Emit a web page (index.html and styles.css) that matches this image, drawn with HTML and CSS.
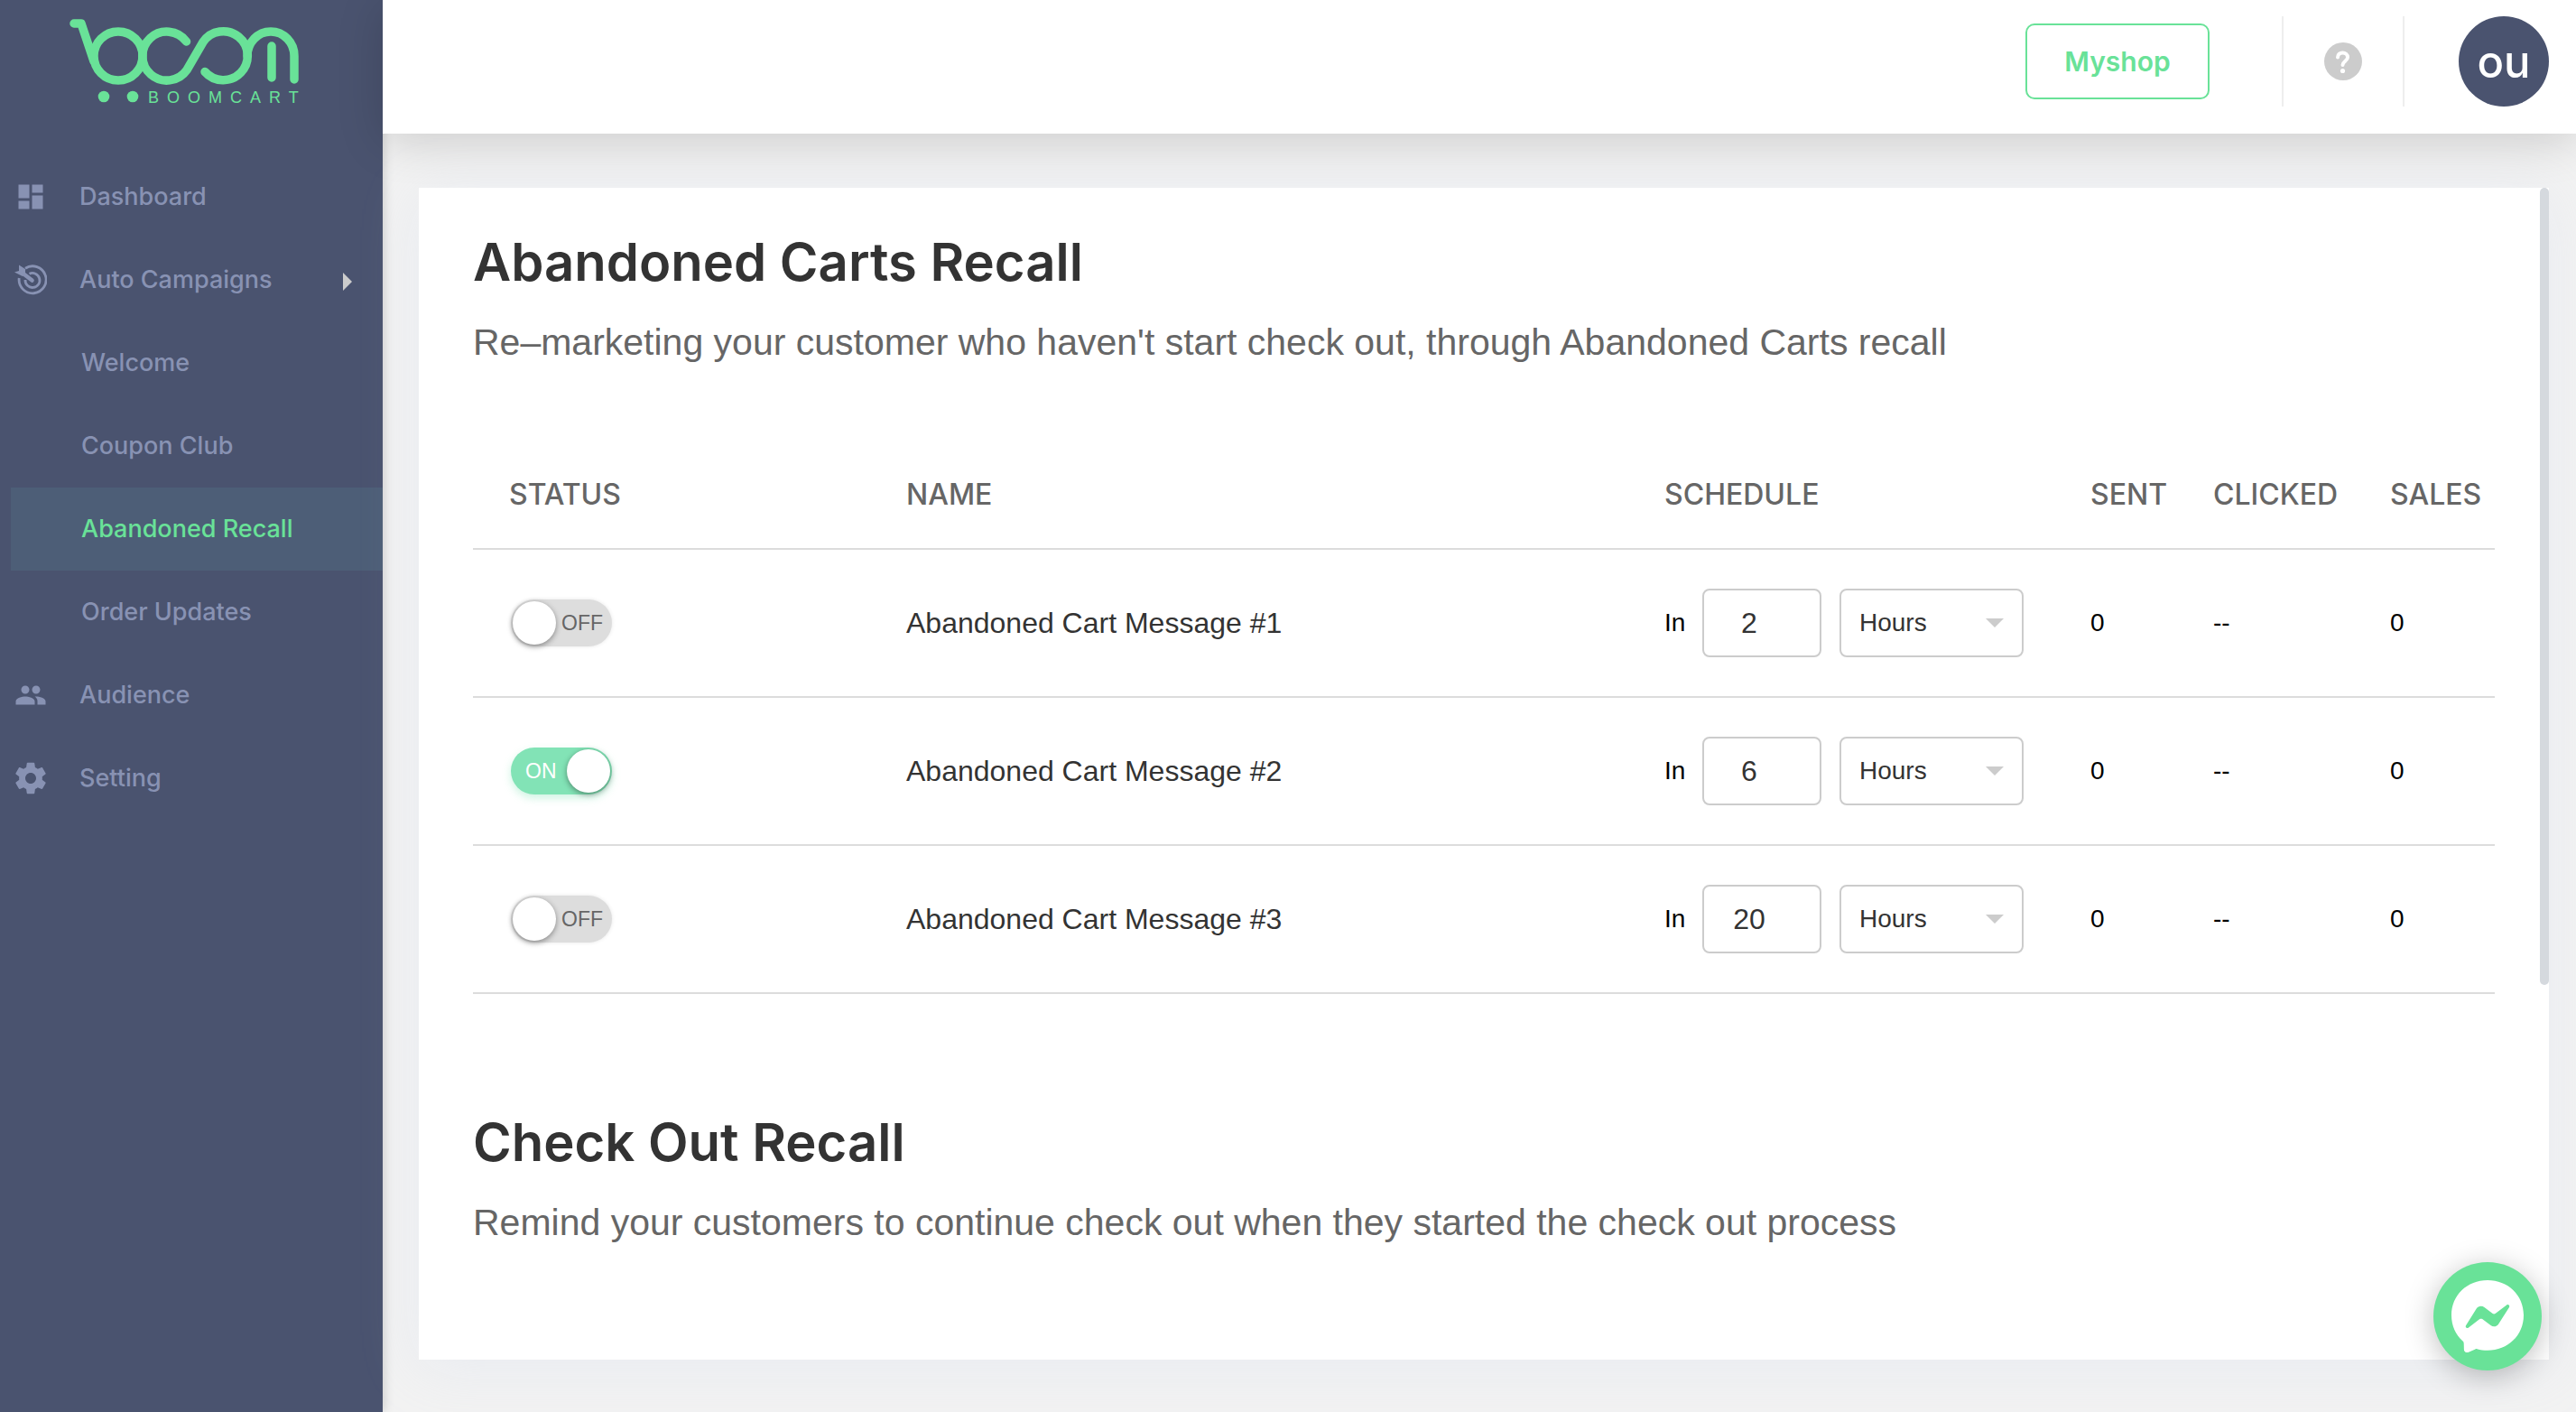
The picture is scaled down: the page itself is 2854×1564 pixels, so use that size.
FILE: index.html
```html
<!DOCTYPE html>
<html lang="en">
<head>
<meta charset="utf-8">
<meta name="viewport" content="width=device-width, initial-scale=1">
<title>Boomcart – Abandoned Recall</title>
<link rel="stylesheet" href="styles.css">
</head>
<body>
<div class="app">
  <aside class="sidebar">
    <a class="logo" href="#" aria-label="Boomcart">
      <svg class="logo-mark" viewBox="0 0 256 96" aria-hidden="true">
        <g fill="none" stroke="currentColor" stroke-width="9.5" stroke-linecap="round" stroke-linejoin="round">
          <path d="M6 6H14L28 48"/>
          <circle cx="55" cy="42" r="27"/>
          <path d="M130.500 26A27 27 0 1 0 131 57.500L149 26.500A27 27 0 1 1 151 59.500"/>
          <path d="M198 42A26 27 0 0 1 250 42V68M225 31V66"/>
        </g>
        <g fill="currentColor">
          <circle cx="39" cy="87" r="6.300"/>
          <circle cx="71" cy="87" r="6.300"/>
        </g>
      </svg>
      <span class="logo-name">BOOMCART</span>
    </a>
    <nav class="nav" aria-label="Main">
      <a class="nav-item" href="#">
        <svg class="icon" viewBox="0 0 24 24" aria-hidden="true"><path fill="currentColor" d="M3 13h8V3H3v10zm0 8h8v-6H3v6zm10 0h8V11h-8v10zm0-18v6h8V3h-8z"/></svg>
        Dashboard
      </a>
      <a class="nav-item" href="#">
        <svg class="icon" viewBox="0 0 36 36" aria-hidden="true">
          <g fill="none" stroke="currentColor" stroke-width="2.800">
            <path d="M12 5.200A15 15 0 1 1 5.200 16"/>
            <path d="M16.500 11.300A8 8 0 1 1 12 18"/>
          </g>
          <path d="M9 10.500L19.500 18.500" stroke="currentColor" stroke-width="4.600" stroke-linecap="round"/>
          <path fill="currentColor" d="M5 1.500L12 6V11L9 14 0 9.500 5 8z"/>
        </svg>
        Auto Campaigns
        <span class="caret"></span>
      </a>
      <a class="nav-item nav-sub" href="#">Welcome</a>
      <a class="nav-item nav-sub" href="#">Coupon Club</a>
      <a class="nav-item nav-sub nav-active" href="#" aria-current="page">Abandoned Recall</a>
      <a class="nav-item nav-sub" href="#">Order Updates</a>
      <a class="nav-item" href="#">
        <svg class="icon" viewBox="0 0 24 24" aria-hidden="true"><path fill="currentColor" d="M16 11c1.660 0 2.990-1.340 2.990-3S17.660 5 16 5s-3 1.340-3 3 1.340 3 3 3zm-8 0c1.660 0 2.990-1.340 2.990-3S9.660 5 8 5 5 6.340 5 8s1.340 3 3 3zm0 2c-2.330 0-7 1.170-7 3.500V19h14v-2.500c0-2.330-4.670-3.500-7-3.500zm8 0c-.29 0-.62.020-.970.050 1.160.840 1.970 1.970 1.970 3.450V19h6v-2.500c0-2.330-4.670-3.500-7-3.500z"/></svg>
        Audience
      </a>
      <a class="nav-item" href="#">
        <svg class="icon" viewBox="1.500 1.500 21 21" aria-hidden="true"><path fill="currentColor" d="M19.430 12.980c.040-.32.070-.64.070-.98s-.030-.66-.070-.98l2.110-1.650c.19-.15.240-.42.120-.64l-2-3.460c-.12-.22-.39-.3-.61-.22l-2.490 1c-.52-.4-1.080-.73-1.690-.98l-.38-2.650C14.460 2.180 14.250 2 14 2h-4c-.25 0-.46.180-.49.420l-.38 2.650c-.61.250-1.170.590-1.690.98l-2.490-1c-.23-.09-.49 0-.61.220l-2 3.460c-.13.220-.07.490.12.640l2.110 1.650c-.04.320-.07.650-.07.980s.030.660.070.980l-2.110 1.650c-.19.150-.24.420-.12.640l2 3.460c.12.220.39.300.61.220l2.490-1c.52.400 1.080.730 1.690.980l.38 2.650c.030.240.240.420.49.420h4c.25 0 .46-.18.490-.42l.38-2.650c.61-.25 1.170-.59 1.690-.98l2.490 1c.23.090.49 0 .61-.22l2-3.460c.12-.22.070-.49-.12-.64l-2.110-1.650zM12 15.500c-1.930 0-3.500-1.570-3.500-3.500s1.570-3.500 3.500-3.500 3.500 1.570 3.500 3.500-1.570 3.500-3.500 3.500z"/></svg>
        Setting
      </a>
    </nav>
  </aside>

  <div class="page">
    <header class="topbar">
      <button class="shop-button" type="button">Myshop</button>
      <div class="help">
        <button class="help-button" type="button" aria-label="Help">
          <svg viewBox="0 0 42 42" aria-hidden="true">
            <circle cx="21" cy="21" r="21" fill="#ccc"/>
            <path d="M15 16.500C15 9.500 26 10 26 16.500C26 20.500 20.500 21 20.500 25" fill="none" stroke="#fff" stroke-width="4" stroke-linecap="round"/>
            <circle cx="20.500" cy="31.500" r="2.600" fill="#fff"/>
          </svg>
        </button>
      </div>
      <button class="avatar" type="button">ou</button>
    </header>

    <main class="content">
      <div class="card">
        <section class="block">
          <h1 class="title">Abandoned Carts Recall</h1>
          <p class="lead">Re–marketing your customer who haven't start check out, through Abandoned Carts recall</p>
          <table class="messages">
            <colgroup><col class="col-status"><col class="col-name"><col class="col-schedule"><col class="col-sent"><col class="col-clicked"><col class="col-sales"></colgroup>
            <thead>
              <tr><th scope="col">STATUS</th><th scope="col">NAME</th><th scope="col">SCHEDULE</th><th scope="col">SENT</th><th scope="col">CLICKED</th><th scope="col">SALES</th></tr>
            </thead>
            <tbody>
              <tr>
                <td><label class="switch"><input type="checkbox" aria-label="Abandoned Cart Message #1 status"><span class="switch-on">ON</span><span class="switch-off">OFF</span></label></td>
                <td class="name">Abandoned Cart Message #1</td>
                <td><div class="schedule"><label for="delay-1">In</label><input class="delay" id="delay-1" type="text" inputmode="numeric" value="2"><span class="unit"><select aria-label="Unit for message #1"><option>Hours</option></select></span></div></td>
                <td>0</td><td>--</td><td>0</td>
              </tr>
              <tr>
                <td><label class="switch"><input type="checkbox" checked aria-label="Abandoned Cart Message #2 status"><span class="switch-on">ON</span><span class="switch-off">OFF</span></label></td>
                <td class="name">Abandoned Cart Message #2</td>
                <td><div class="schedule"><label for="delay-2">In</label><input class="delay" id="delay-2" type="text" inputmode="numeric" value="6"><span class="unit"><select aria-label="Unit for message #2"><option>Hours</option></select></span></div></td>
                <td>0</td><td>--</td><td>0</td>
              </tr>
              <tr>
                <td><label class="switch"><input type="checkbox" aria-label="Abandoned Cart Message #3 status"><span class="switch-on">ON</span><span class="switch-off">OFF</span></label></td>
                <td class="name">Abandoned Cart Message #3</td>
                <td><div class="schedule"><label for="delay-3">In</label><input class="delay" id="delay-3" type="text" inputmode="numeric" value="20"><span class="unit"><select aria-label="Unit for message #3"><option>Hours</option></select></span></div></td>
                <td>0</td><td>--</td><td>0</td>
              </tr>
            </tbody>
          </table>
        </section>
        <section class="block">
          <h2 class="title">Check Out Recall</h2>
          <p class="lead">Remind your customers to continue check out when they started the check out process</p>
        </section>
        <div class="scroll-thumb"></div>
      </div>
    </main>
  </div>
</div>

<button class="chat" type="button" aria-label="Chat on Messenger">
  <svg viewBox="0 0 80 80" aria-hidden="true">
    <path fill="#fff" d="M40 0C17.500 0 0 16.500 0 38.800 0 50.500 4.800 60.600 12.600 67.600 13.300 68.200 13.700 69 13.700 70L13.900 77.100C14 79.300 16.300 80.800 18.400 79.900L26.400 76.400C27 76.100 27.800 76 28.400 76.200 32 77.200 36 77.700 40 77.700 62.500 77.700 80 61.200 80 38.800S62.500 0 40 0Z"/>
    <path fill="#69e298" d="M16 50.200L27.700 31.600C29.600 28.600 33.600 27.900 36.400 30L45.700 37C46.600 37.600 47.700 37.600 48.600 37L61.200 27.400C62.900 26.100 65.100 28.100 64 29.900L52.200 48.500C50.400 51.500 46.400 52.200 43.500 50.100L34.200 43.100C33.400 42.500 32.200 42.500 31.300 43.100L18.700 52.700C17 53.900 14.900 52 16 50.200Z"/>
  </svg>
</button>
</body>
</html>
```
FILE: styles.css
```css
:root {
  --green: #69e298;
  --navy: #4a536f;
  --muted: #8892b3;
  --line: #dcdcdc;
  --medium: Inter, "Liberation Sans", sans-serif;
}

* { box-sizing: border-box; }

body {
  margin: 0;
  background: #f2f2f2;
  color: #000;
  font: 28px/1 "Liberation Sans", Arial, sans-serif;
}

button {
  padding: 0;
  border: 0;
  background: none;
  font: inherit;
  cursor: pointer;
}

a { color: inherit; text-decoration: none; }

.app { display: flex; min-height: 100vh; }

/* Sidebar */
.sidebar {
  flex: 0 0 424px;
  background: var(--navy);
  box-shadow: 0 0 12px rgba(0, 0, 0, .2);
}

.logo {
  display: flex;
  flex-direction: column;
  height: 172px;
  padding: 20px 0 0 76px;
  color: var(--green);
}

.logo-mark { display: block; width: 256px; height: 96px; }

.logo-name {
  width: 180px;
  margin: -18px 0 0 88px;
  font-size: 18px;
  line-height: 20px;
  letter-spacing: 9px;
}

.nav {
  display: flex;
  flex-direction: column;
  color: var(--muted);
  font: 500 27px/92px var(--medium);
}

.nav-item {
  display: flex;
  align-items: center;
  height: 92px;
  padding-left: 16px;
}

.icon { width: 36px; height: 36px; margin-right: 36px; }

.caret {
  margin: 4px 34px 0 auto;
  border: 10px solid transparent;
  border-right: 0;
  border-left-color: #ccc;
}

.nav-sub { margin-left: 12px; padding-left: 78px; }

.nav-active { background: #4d5e77; color: var(--green); }

/* Top bar */
.page { flex: 1; display: flex; flex-direction: column; min-width: 0; }

.topbar {
  display: flex;
  align-items: flex-start;
  justify-content: flex-end;
  height: 148px;
  padding: 18px 30px 0;
  background: #fff;
  box-shadow: 0 8px 48px rgba(0, 0, 0, .16);
}

.shop-button {
  width: 204px;
  height: 84px;
  margin: 8px 80px 0 0;
  border: 2px solid var(--green);
  border-radius: 10px;
  color: var(--green);
  font: 600 30px var(--medium);
}

.help {
  display: flex;
  align-items: center;
  justify-content: center;
  width: 136px;
  height: 100px;
  margin-right: 60px;
  border: solid #eee;
  border-width: 0 2px;
}

.help-button, .help-button svg { display: block; width: 42px; height: 42px; }

.avatar {
  width: 100px;
  height: 100px;
  border-radius: 50%;
  background: var(--navy);
  color: #fff;
  font: 500 49px var(--medium);
}

/* Content */
.content { flex: 1; display: flex; padding: 60px 30px 58px 40px; }

.card {
  position: relative;
  flex: 1;
  padding: 46px 60px 0;
  background: #fff;
  box-shadow: 0 8px 60px rgba(200, 212, 240, .22);
}

.block { margin-bottom: 128px; }

.title {
  margin: 0;
  color: #333;
  font: 600 58px/72px var(--medium);
}

.lead {
  margin: 29px 0 0;
  color: #666;
  font-size: 41px;
  line-height: 48px;
}

.messages {
  width: 100%;
  margin-top: 85px;
  border-collapse: collapse;
  table-layout: fixed;
  text-align: left;
}

.col-status { width: 480px; }
.col-schedule { width: 472px; }
.col-sent { width: 136px; }
.col-clicked { width: 196px; }
.col-sales { width: 116px; }

.messages tr { border-bottom: 2px solid var(--line); }

.messages th {
  height: 120px;
  padding: 0;
  color: #666;
  font: 500 32px/1 var(--medium);
}

.messages td { height: 164px; padding: 0; }

.messages th:first-child { padding-left: 40px; }
.messages td:first-child { padding-left: 42px; }

.messages .name { color: #333; font-size: 32px; }

.switch {
  position: relative;
  display: flex;
  align-items: center;
  justify-content: flex-end;
  width: 112px;
  height: 52px;
  padding: 0 10px;
  border-radius: 26px;
  background: #ddd;
  box-shadow: 0 0 4px rgba(0, 0, 0, .1);
  color: #666;
  font-size: 23px;
  cursor: pointer;
}

.switch input {
  position: absolute;
  top: 2px;
  left: 2px;
  appearance: none;
  width: 48px;
  height: 48px;
  margin: 0;
  border-radius: 50%;
  background: #fff;
  box-shadow: 0 2px 6px rgba(0, 0, 0, .4);
}

.switch-on { display: none; }

.switch:has(:checked) {
  justify-content: flex-start;
  padding: 0 16px;
  background: #82e3b6;
  box-shadow: 0 4px 10px rgba(130, 227, 182, .4);
  color: #fff;
}

.switch:has(:checked) input { left: 62px; }
.switch:has(:checked) .switch-on { display: inline; }
.switch:has(:checked) .switch-off { display: none; }

.schedule { display: flex; align-items: center; }
.schedule label { width: 42px; }

.delay, .unit select {
  height: 76px;
  border: 2px solid #ccc;
  border-radius: 8px;
  background: #fff;
  color: #333;
  font: 32px/1 "Liberation Sans", Arial, sans-serif;
}

.delay {
  width: 132px;
  margin-right: 20px;
  padding: 0 28px 0 0;
  text-align: center;
}

.unit { display: grid; align-items: center; }

.unit select {
  grid-area: 1 / 1;
  appearance: none;
  width: 204px;
  padding: 0 20px;
  font-size: 28px;
}

.unit::after {
  content: "";
  grid-area: 1 / 1;
  justify-self: end;
  margin-right: 22px;
  border: 10px solid transparent;
  border-bottom: 0;
  border-top-color: #ccc;
  pointer-events: none;
}

.scroll-thumb {
  position: absolute;
  top: 0;
  right: 0;
  width: 10px;
  height: 68%;
  border-radius: 5px;
  background: #d5d9de;
}

/* Floating chat launcher */
.chat {
  position: fixed;
  right: 38px;
  bottom: 46px;
  display: grid;
  place-items: center;
  width: 120px;
  height: 120px;
  border-radius: 50%;
  background: var(--green);
  box-shadow: 0 6px 32px rgba(0, 0, 0, .25);
}

.chat svg { width: 80px; height: 80px; }
```
